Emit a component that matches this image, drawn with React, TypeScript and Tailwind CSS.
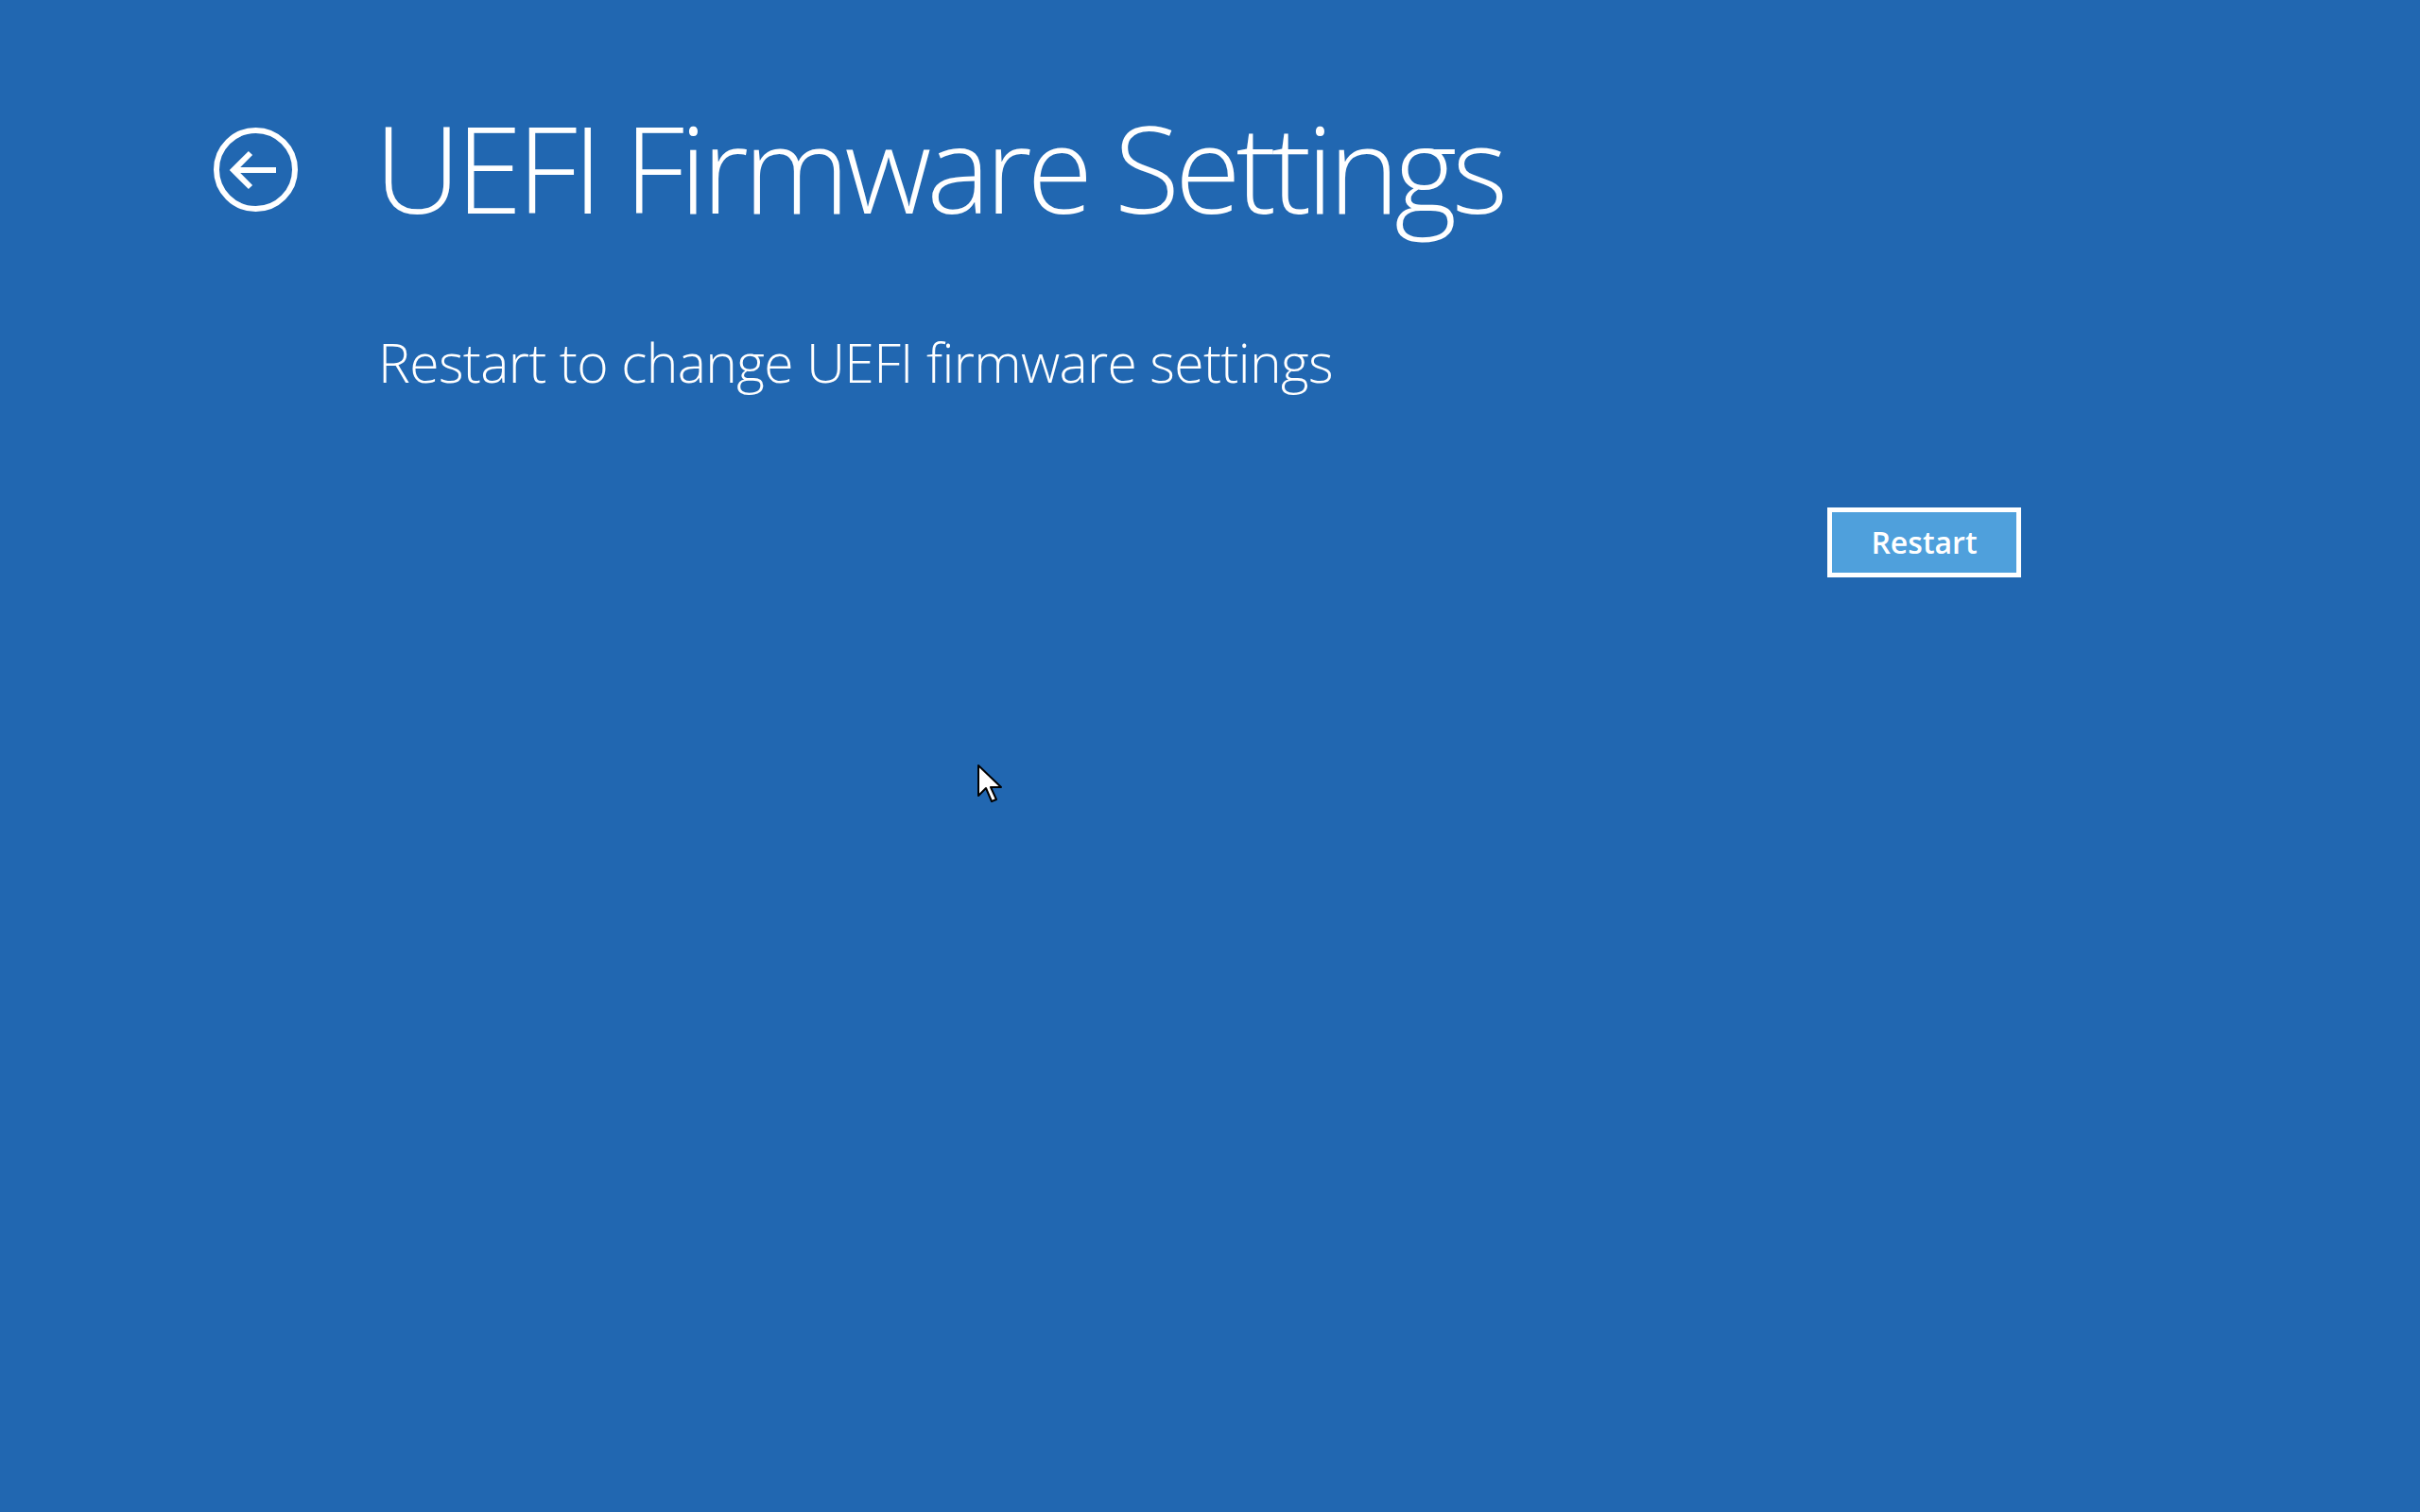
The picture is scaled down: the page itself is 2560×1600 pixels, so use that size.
export default function App() {
  return (
    <div
      className="relative h-[1600px] w-full overflow-hidden bg-[#2167b1] text-white"
      style={{ fontFamily: '"Open Sans", "Noto Sans", sans-serif' }}
    >
      <div className="flex flex-col pl-[226px] pt-[113px]">
        <div className="flex items-start">
          <button className="mt-[22px] h-[89px] w-[89px] shrink-0">
            <svg viewBox="0 0 89 89" className="h-full w-full">
              <circle cx="44.5" cy="44.5" r="41.5" fill="none" stroke="white" strokeWidth="6" />
              <path d="M22 45 H66" stroke="white" strokeWidth="6" fill="none" />
              <path d="M39 27 L21 45 L39 63" stroke="white" strokeWidth="6" fill="none" strokeLinejoin="miter" />
            </svg>
          </button>
          <h1 className="ml-[81px] text-[127px] font-light leading-none tracking-[-5.2px]">
            UEFI Firmware Settings
          </h1>
        </div>

        <div className="mt-[115px] flex w-[1912px] flex-col pl-[174px]">
          <p className="text-[57px] font-light leading-none tracking-[-0.65px]">
            Restart to change UEFI firmware settings
          </p>
          <button className="mt-[125px] h-[74px] w-[205px] self-end border-[5px] border-white bg-[#4fa0dc] text-[32px] font-semibold leading-none text-white">
            Restart
          </button>
        </div>
      </div>

      {/* mouse pointer */}
      <svg
        className="absolute left-[1033px] top-[808px]"
        width="30"
        height="44"
        viewBox="0 0 15 22"
      >
        <path
          d="M1 1 L1 17 L5 13 L8 20 L10.5 19 L7.5 12.5 L13 12.5 Z"
          fill="white"
          stroke="black"
          strokeWidth="1"
          strokeLinejoin="round"
        />
      </svg>
    </div>
  );
}
